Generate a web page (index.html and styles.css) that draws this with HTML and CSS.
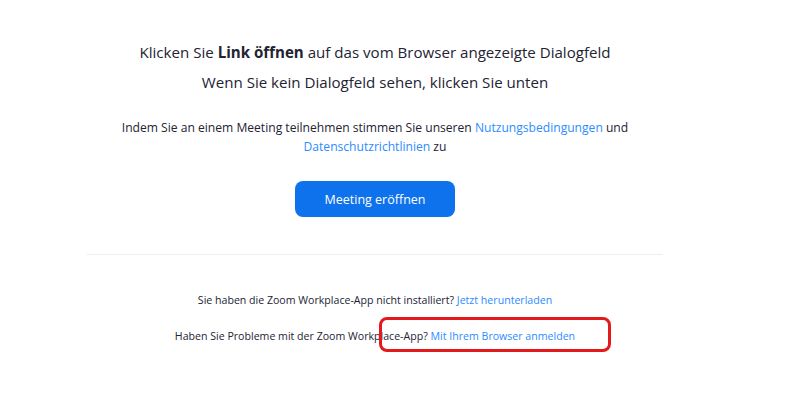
FILE: index.html
```html
<!DOCTYPE html>
<html lang="de">
<head>
<meta charset="utf-8">
<link rel="stylesheet" href="styles.css">
</head>
<body>
<div class="page">
  <div class="content">
    <h1 class="title">Klicken Sie <strong>Link öffnen</strong> auf das vom Browser angezeigte Dialogfeld</h1>
    <h2 class="subtitle">Wenn Sie kein Dialogfeld sehen, klicken Sie unten</h2>
    <p class="terms">Indem Sie an einem Meeting teilnehmen stimmen Sie unseren <a href="#">Nutzungsbedingungen</a> und<br><a href="#">Datenschutzrichtlinien</a> zu</p>
    <div class="action">
      <button class="btn">Meeting eröffnen</button>
    </div>
    <div class="divider"></div>
    <p class="note first">Sie haben die Zoom Workplace-App nicht installiert? <a href="#">Jetzt herunterladen</a></p>
    <p class="note second">Haben Sie Probleme mit der Zoom Workplace-App? <a href="#">Mit Ihrem Browser anmelden</a></p>
    <div class="highlight"></div>
  </div>
</div>
</body>
</html>
```
FILE: styles.css
```css
html, body {
  margin: 0;
  padding: 0;
  background: #ffffff;
}
body {
  font-family: "Open Sans", "Liberation Sans", sans-serif;
  color: #232333;
}
.page {
  width: 750px;
  min-height: 100vh;
  display: flex;
  justify-content: center;
}
.content {
  position: relative;
  width: 576px;
  padding-top: 40px;
  text-align: center;
}
.title {
  margin: 0;
  font-size: 15.1px;
  font-weight: 400;
  line-height: 24px;
}
.title strong {
  font-weight: 700;
}
.subtitle {
  margin: 6px 0 0;
  font-size: 15.1px;
  font-weight: 400;
  line-height: 24px;
}
.terms {
  margin: 24px 0 0;
  font-size: 12.1px;
  line-height: 19px;
}
a {
  color: #2d8cff;
  text-decoration: none;
}
.action {
  display: flex;
  justify-content: center;
  margin-top: 25px;
}
.btn {
  width: 160px;
  height: 36px;
  border: none;
  border-radius: 8px;
  background: #0e72ed;
  color: #ffffff;
  font-family: "Open Sans", "Liberation Sans", sans-serif;
  font-size: 12.5px;
}
.divider {
  margin-top: 37px;
  height: 1px;
  background: #ededf4;
}
.note {
  font-size: 10.6px;
  line-height: 16px;
  margin: 0;
}
.note.first {
  margin-top: 37px;
}
.note.second {
  margin-top: 20px;
}
.highlight {
  position: absolute;
  left: 292px;
  top: 317px;
  width: 226px;
  height: 29px;
  border: 3px solid #e4191c;
  border-radius: 8px;
  pointer-events: none;
}
```
